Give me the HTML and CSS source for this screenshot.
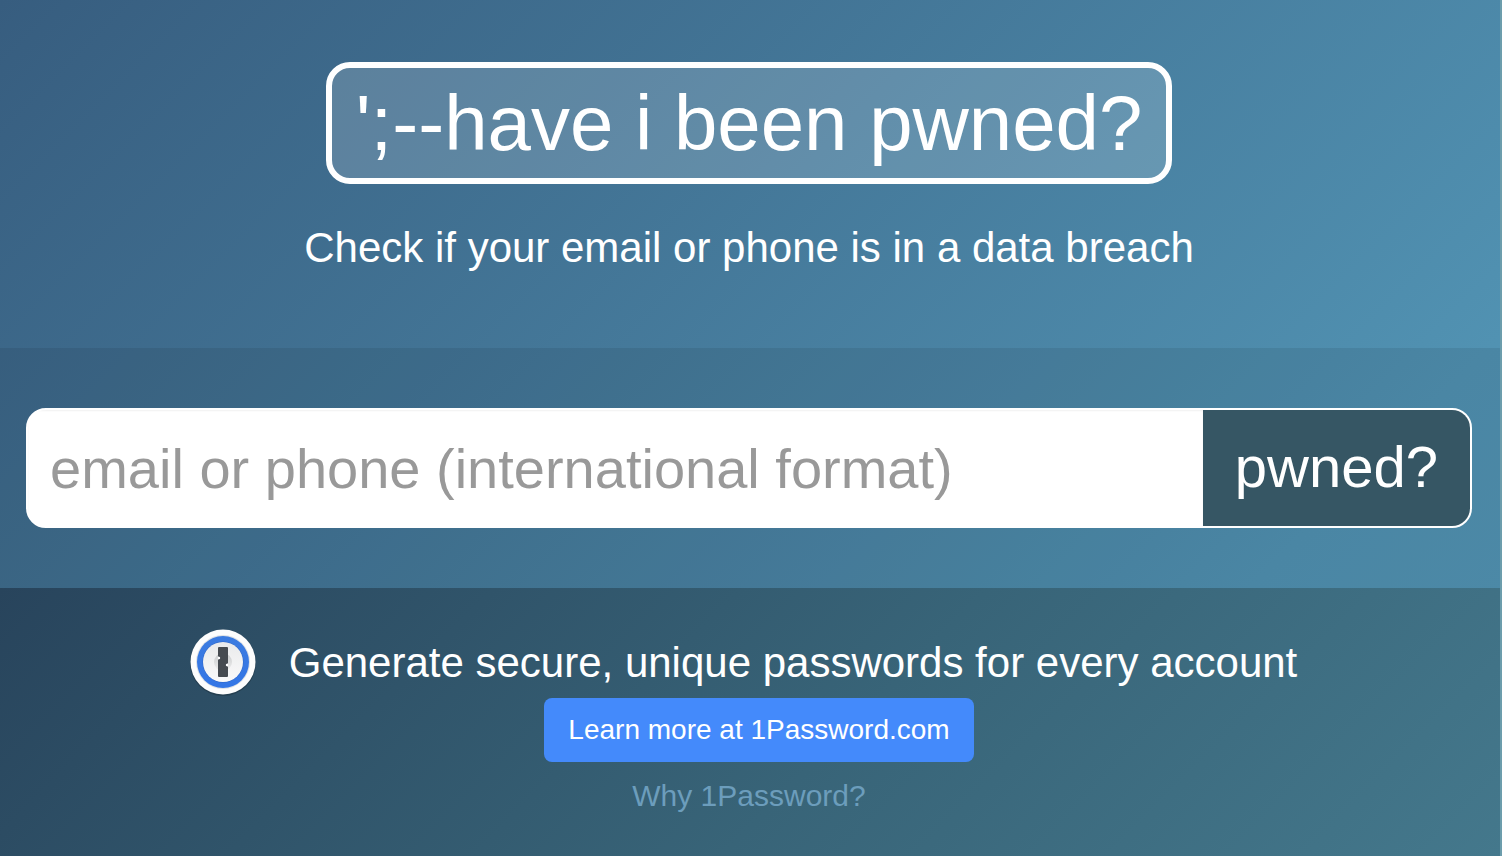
FILE: index.html
```
<!DOCTYPE html>
<html lang="en">
<head>
<meta charset="utf-8">
<title>Have I Been Pwned</title>
<link rel="stylesheet" href="styles.css">
</head>
<body>
<main class="page">
  <header class="hero">
    <h1 class="logo">';--have i been pwned?</h1>
    <p class="tagline">Check if your email or phone is in a data breach</p>
  </header>
  <form class="search">
    <div class="search-group">
      <input class="search-input" type="text" aria-label="Email or phone" placeholder="email or phone (international format)">
      <button class="search-button" type="button">pwned?</button>
    </div>
  </form>
  <section class="promo">
    <div class="promo-line">
      <svg class="promo-icon" viewBox="0 0 72 72" aria-hidden="true">
        <defs>
          <linearGradient id="ring" x1="0" y1="0" x2="0" y2="1"><stop offset="0" stop-color="#3b7be0"/><stop offset="1" stop-color="#3476e6"/></linearGradient>
          <linearGradient id="face" x1="0" y1="0" x2="0" y2="1"><stop offset="0" stop-color="#e9eaeb"/><stop offset="1" stop-color="#fafafa"/></linearGradient>
          <linearGradient id="knob" x1="0" y1="0" x2="0" y2="1"><stop offset="0" stop-color="#c9cbcc"/><stop offset="1" stop-color="#eeeeee"/></linearGradient>
        </defs>
        <circle cx="36" cy="37" r="33" fill="#000" opacity=".2"/>
        <circle cx="36" cy="36" r="32.500" fill="#fdfdfd"/>
        <circle cx="36" cy="36" r="27" fill="#dfe2e5"/>
        <circle cx="36" cy="36" r="26" fill="url(#ring)"/>
        <circle cx="36" cy="36" r="20.500" fill="#2d65c6"/>
        <circle cx="36" cy="36" r="20" fill="url(#face)"/>
        <circle cx="36" cy="36" r="9" fill="url(#knob)"/>
        <path d="M32 21H40Q41 21 41 22V37L39 39L41 41V50Q41 51 40 51H32Q31 51 31 50V34L33 32L31 30V22Q31 21 32 21Z" fill="#464b50"/>
        <circle cx="32" cy="32" r="1.200" fill="#fff"/>
        <circle cx="40" cy="39" r="1.200" fill="#fff"/>
      </svg>
      <p class="promo-text">Generate secure, unique passwords for every account</p>
    </div>
    <a class="promo-button" href="#">Learn more at 1Password.com</a>
    <a class="promo-link" href="#">Why 1Password?</a>
  </section>
</main>
</body>
</html>
```
FILE: styles.css
```
* { box-sizing: border-box; }
body { margin: 0; font-family: "Liberation Sans", Arial, sans-serif; color: #fff; }
h1, p { margin: 0; font-weight: 400; }
.page { min-height: 100vh; display: flex; flex-direction: column; border-right: 2px solid #6c9dac; background: linear-gradient(135deg, #375d7f 0%, #5192b2 78%, #5598ba 100%); }
.hero { display: flex; flex-direction: column; align-items: center; gap: 38px; padding: 62px 2px 74px 0; }
.logo { padding: 16px 24px; border: 6px solid #fff; border-radius: 24px; background: rgba(255, 255, 255, 0.16); font-size: 78px; line-height: 78px; }
.tagline { font-size: 42px; line-height: 52px; }
.search { padding: 60px 28px 60px 26px; background: rgba(0, 0, 0, 0.08); }
.search-group { display: flex; height: 120px; border: 2px solid #fff; border-radius: 20px; background: #fff; overflow: hidden; }
.search-input { flex: 1; min-width: 0; padding: 0 22px; border: 0; background: #fff; box-shadow: inset 0 1px 2px rgba(0, 0, 0, 0.06); color: #555; font: 56px "Liberation Sans", Arial, sans-serif; }
.search-input::placeholder { color: #999; opacity: 1; }
.search-button { padding: 0 32px 4px; border: 0; background: #365664; color: #fff; font: 58px "Liberation Sans", Arial, sans-serif; }
.promo { flex: 1; display: flex; flex-direction: column; align-items: center; padding: 38px 2px 0 0; background: linear-gradient(135deg, #28445c 0%, #386478 56%, #44788c 100%); }
.promo-line { display: flex; align-items: center; gap: 30px; padding-right: 14px; }
.promo-icon { width: 72px; height: 72px; }
.promo-text { padding-top: 2px; font-size: 42px; line-height: 70px; }
.promo-button { margin-left: 20px; padding: 0 24px; border-radius: 8px; background: #448afb; color: #fff; font-size: 28px; line-height: 64px; text-decoration: none; }
.promo-link { margin-top: 16px; color: #6c9dbc; font-size: 30px; line-height: 36px; text-decoration: none; }
```
